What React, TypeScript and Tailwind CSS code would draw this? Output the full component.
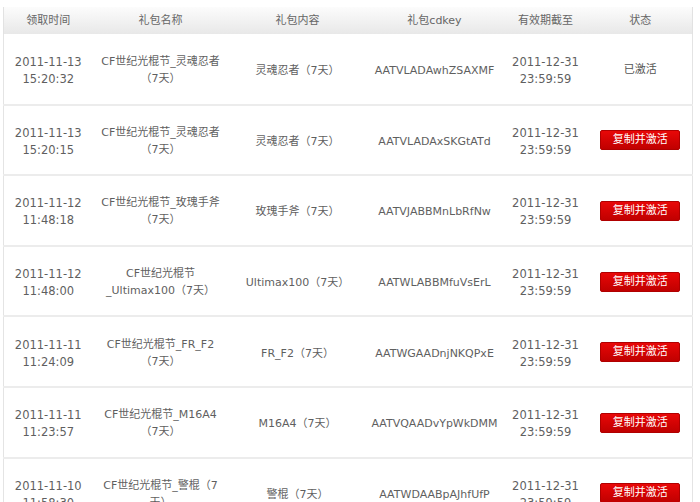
import React from "react"

type Row = {
  time: [string, string]
  name: string[]
  content: string
  key: string
  activated?: boolean
}

const rows: Row[] = [
  { time: ["2011-11-13", "15:20:32"], name: ["CF世纪光棍节_灵魂忍者", "（7天）"], content: "灵魂忍者（7天）", key: "AATVLADAwhZSAXMF", activated: true },
  { time: ["2011-11-13", "15:20:15"], name: ["CF世纪光棍节_灵魂忍者", "（7天）"], content: "灵魂忍者（7天）", key: "AATVLADAxSKGtATd" },
  { time: ["2011-11-12", "11:48:18"], name: ["CF世纪光棍节_玫瑰手斧", "（7天）"], content: "玫瑰手斧（7天）", key: "AATVJABBMnLbRfNw" },
  { time: ["2011-11-12", "11:48:00"], name: ["CF世纪光棍节", "_Ultimax100（7天）"], content: "Ultimax100（7天）", key: "AATWLABBMfuVsErL" },
  { time: ["2011-11-11", "11:24:09"], name: ["CF世纪光棍节_FR_F2", "（7天）"], content: "FR_F2（7天）", key: "AATWGAADnjNKQPxE" },
  { time: ["2011-11-11", "11:23:57"], name: ["CF世纪光棍节_M16A4", "（7天）"], content: "M16A4（7天）", key: "AATVQAADvYpWkDMM" },
  { time: ["2011-11-10", "11:58:30"], name: ["CF世纪光棍节_警棍（7", "天）"], content: "警棍（7天）", key: "AATWDAABpAJhfUfP" },
]

const font = { fontFamily: '"DejaVu Sans", "Noto Sans CJK SC", sans-serif' }

export default function App() {
  return (
    <div className="w-[700px] h-[502px] overflow-hidden bg-white pt-[7px] pl-[3px]" style={font}>
      <table className="table-fixed border-collapse w-[689px] text-[11px] leading-[17px] text-[#5f5f5f]">
        <colgroup>
          <col className="w-[89px]" />
          <col className="w-[136px]" />
          <col className="w-[138px]" />
          <col className="w-[136px]" />
          <col className="w-[86px]" />
          <col className="w-[104px]" />
        </colgroup>
        <thead>
          <tr className="h-[27px] bg-gradient-to-b from-[#fcfcfc] to-[#e8e8e8] border-x border-[#e2e2e2]">
            {["领取时间", "礼包名称", "礼包内容", "礼包cdkey", "有效期截至", "状态"].map((h) => (
              <th key={h} className="font-normal text-center text-[#666] text-[11px]">
                {h}
              </th>
            ))}
          </tr>
        </thead>
        <tbody>
          {rows.map((r, i) => (
            <tr key={i} className="h-[70.6px] border-x border-[#e4e4e4] border-b-2 border-b-[#ececec]">
              <td className="text-center text-[11.5px] pt-[4px]">
                <div>{r.time[0]}</div>
                <div>{r.time[1]}</div>
              </td>
              <td className="text-center pt-[2px]">
                {r.name.map((l) => (
                  <div key={l} className="whitespace-nowrap">{l}</div>
                ))}
              </td>
              <td className="text-center whitespace-nowrap pt-[3px]">{r.content}</td>
              <td className="text-center whitespace-nowrap pt-[3px]">{r.key}</td>
              <td className="text-center text-[11.5px] pt-[4px]">
                <div>2011-12-31</div>
                <div>23:59:59</div>
              </td>
              <td className="text-center pt-[1px]">
                {r.activated ? (
                  <span className="text-[#555]">已激活</span>
                ) : (
                  <button className="w-[80px] h-[20px] rounded-[2px] border border-[#b00000] bg-gradient-to-b from-[#e80808] to-[#c00000] text-white text-[11px] leading-[18px]">
                    复制并激活
                  </button>
                )}
              </td>
            </tr>
          ))}
        </tbody>
      </table>
    </div>
  )
}
